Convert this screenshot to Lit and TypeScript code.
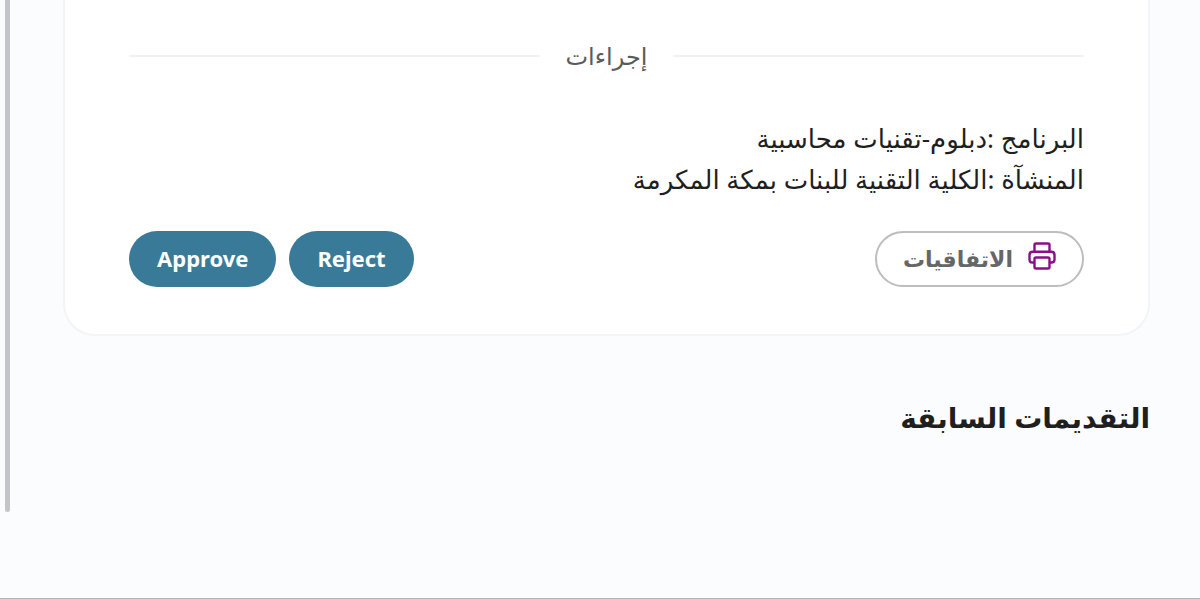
import { LitElement, html, css } from "lit";
import { customElement } from "lit/decorators.js";

@customElement("app-root")
export class AppRoot extends LitElement {
  static styles = css`
    :host {
      display: block;
      direction: rtl;
      font-family: "Noto Sans", "DejaVu Sans", sans-serif;
      color: #1f1f1f;
    }
    * {
      box-sizing: border-box;
    }
    .page {
      display: flex;
      min-height: 100vh;
      background: #fbfcfe;
      border-bottom: 1px solid #b4b5b6;
    }
    .content {
      flex: 1;
      min-width: 0;
      padding: 0 50px 0 52px;
    }
    .rail {
      width: 11px;
      padding: 0 1px 86px 5px;
      display: flex;
    }
    .thumb {
      flex: 1;
      background: #c4c5c8;
      border-radius: 0 0 3px 3px;
    }
    .card {
      background: #fff;
      border: 2px solid #f3f4f6;
      border-top: 0;
      border-radius: 0 0 32px 32px;
      padding: 40px 64px 47px;
    }
    .divider {
      display: flex;
      align-items: center;
      gap: 26px;
      font-size: 24px;
      line-height: 32px;
      color: #5b5b5b;
    }
    .divider::before,
    .divider::after {
      content: "";
      flex: 1;
      height: 2px;
      background: #f1f1f1;
    }
    .details {
      margin: 46px 0 31px;
      font-size: 26px;
      line-height: 41px;
    }
    .details p {
      margin: 0;
    }
    .actions {
      display: flex;
      justify-content: space-between;
      align-items: center;
    }
    .decisions {
      display: flex;
      gap: 13px;
    }
    button {
      display: flex;
      align-items: center;
      justify-content: center;
      height: 56px;
      padding: 0 28px 2px;
      border: 0;
      border-radius: 28px;
      font: inherit;
      font-size: 22px;
      font-weight: 700;
      color: #fff;
      background: #3a7a99;
      cursor: pointer;
    }
    .outline {
      gap: 15px;
      padding: 0 26px 2px;
      border: 2px solid #bdbdbd;
      background: #fff;
      color: #666;
    }
    .outline svg {
      width: 28px;
      height: 28px;
      margin-bottom: 4px;
    }
    h2 {
      margin: 62px 0 0;
      font-size: 28px;
      line-height: 38px;
      font-weight: 700;
    }
  `;

  render() {
    return html`
      <div class="page" lang="ar">
        <main class="content">
          <section class="card">
            <div class="divider"><span>إجراءات</span></div>
            <div class="details">
              <p>البرنامج :دبلوم-تقنيات محاسبية</p>
              <p>المنشآة :الكلية التقنية للبنات بمكة المكرمة</p>
            </div>
            <div class="actions">
              <button class="outline" type="button">
                <svg viewBox="0 0 28 28" fill="none" stroke="#8a0f86" stroke-width="2.4" stroke-linejoin="round" aria-hidden="true">
                  <path d="M6.5 9.5V3Q6.5 1.5 8 1.5H20Q21.5 1.5 21.5 3V9.5" />
                  <path d="M6.5 20.5H4.5Q1.5 20.5 1.5 17.5V13Q1.5 9.8 4.7 9.8H23.3Q26.5 9.8 26.5 13V17.5Q26.5 20.5 23.5 20.5H21.5" />
                  <rect x="6.5" y="15.5" width="15" height="11" rx="1.5" />
                </svg>
                <span>الاتفاقيات</span>
              </button>
              <div class="decisions">
                <button type="button">Reject</button>
                <button type="button">Approve</button>
              </div>
            </div>
          </section>
          <h2>التقديمات السابقة</h2>
        </main>
        <div class="rail"><div class="thumb"></div></div>
      </div>
    `;
  }
}
